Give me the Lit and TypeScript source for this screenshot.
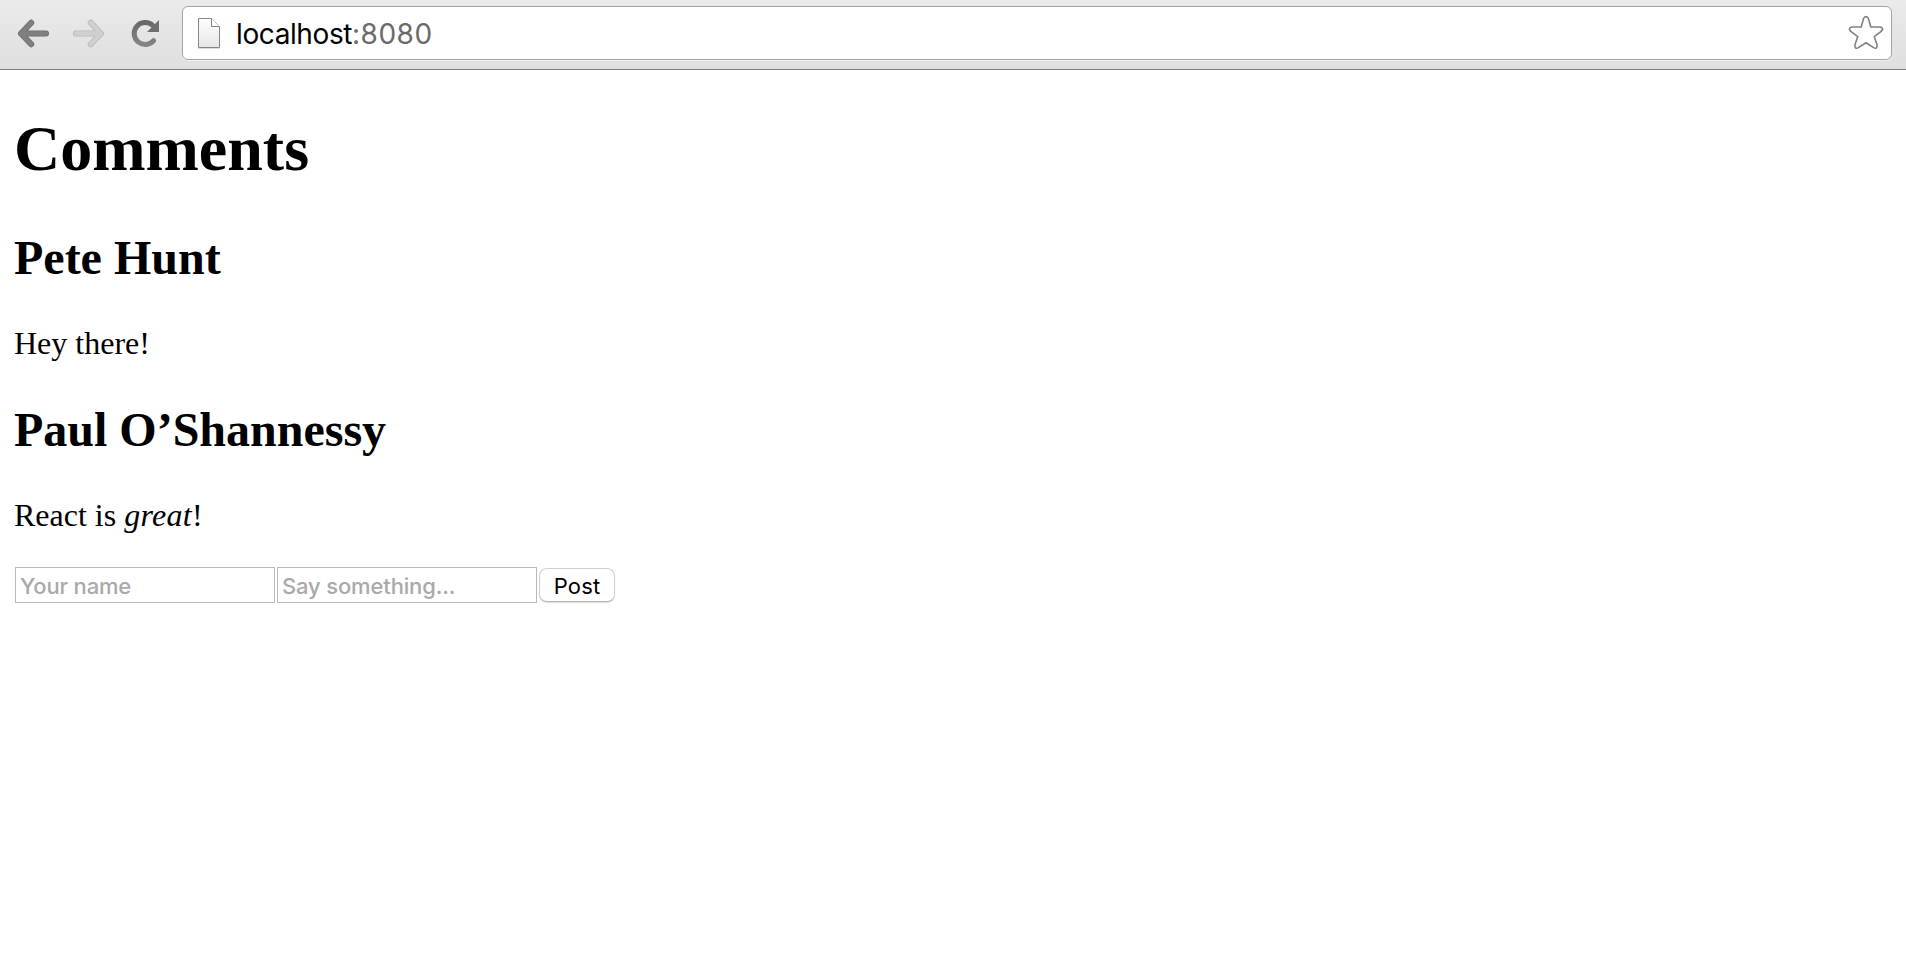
import { LitElement, css, html } from "lit";
import { customElement, property } from "lit/decorators.js";

/**
 * @tag browser-toolbar
 * @summary Navigation buttons and the address bar
 */
@customElement("browser-toolbar")
export class BrowserToolbar extends LitElement {
  @property()
  host = "";

  @property()
  port = "";

  static styles = css`
    :host {
      display: block;
    }

    .toolbar {
      align-items: flex-start;
      background: linear-gradient(#ebebeb, #e0dee0);
      border-bottom: 1px solid #7d7b7d;
      box-sizing: border-box;
      display: flex;
      height: 70px;
      padding: 6px 14px 0 0;
    }

    .nav {
      flex: none;
      height: 56px;
      width: 182px;
    }

    .arrow {
      fill: none;
      stroke-linecap: round;
      stroke-linejoin: round;
    }

    .address {
      align-items: center;
      background: #fff;
      border: 1px solid #a5a4a5;
      border-radius: 6px;
      box-shadow: 0 1px 0 #f0eff0;
      box-sizing: border-box;
      display: flex;
      flex: 1;
      height: 54px;
      padding: 0 7px 0 14px;
    }

    .page {
      flex: none;
      height: 34px;
      width: 24px;
    }

    .url {
      color: #000;
      flex: 1;
      font: 28px/34px Inter, sans-serif;
      letter-spacing: -0.4px;
      padding: 2px 0 0 15px;
    }

    .port {
      color: #6a6a6a;
      letter-spacing: 0.5px;
    }

    .star {
      flex: none;
      height: 36px;
      width: 36px;
    }
  `;

  render() {
    return html`
      <div class="toolbar">
        <svg class="nav" viewBox="0 6 182 56">
          <defs>
            <linearGradient id="dark" x1="0" y1="0" x2="0" y2="1">
              <stop offset="0" stop-color="#686868" />
              <stop offset="1" stop-color="#858585" />
            </linearGradient>
          </defs>
          <g class="arrow">
            <path
              d="M31.2 22.8 21 33.5 31.2 44.2M22 33.5H46"
              stroke="#6a6a6a"
              stroke-width="6"
            />
            <path
              d="M31.2 22.8 21 33.5 31.2 44.2M22 33.5H46"
              stroke="#808080"
              stroke-width="4.4"
            />
          </g>
          <g class="arrow">
            <path
              d="M90.8 22.8 101 33.5 90.8 44.2M100 33.5H76"
              stroke="#b8b8b8"
              stroke-width="6"
            />
            <path
              d="M90.8 22.8 101 33.5 90.8 44.2M100 33.5H76"
              stroke="#d0d0d0"
              stroke-width="4.4"
            />
          </g>
          <path
            d="M153.6 40.6A11 11 0 1 1 152.4 25.2"
            fill="none"
            stroke="url(#dark)"
            stroke-width="5"
            stroke-linecap="round"
          />
          <path d="M159 20V32H147Z" fill="#6e6e6e" />
        </svg>
        <div class="address">
          <svg class="page" viewBox="0 0 24 34">
            <defs>
              <linearGradient id="paper" x1="0" y1="0" x2="0" y2="1">
                <stop offset="0" stop-color="#fff" />
                <stop offset="1" stop-color="#e6e6e6" />
              </linearGradient>
            </defs>
            <path d="M1 32.5H23" stroke="#ddd" />
            <path
              d="M1.5 2.5H14.5L22.5 10.5V31.5H1.5Z"
              fill="url(#paper)"
              stroke="#858585"
            />
            <path d="M14.5 2.5V10.5H22.5" fill="#fff" stroke="#858585" />
          </svg>
          <div class="url">${this.host}<span class="port">:${this.port}</span></div>
          <svg class="star" viewBox="0 0 36 36">
            <path
              d="M15.6 3.4Q18 -.2 20.4 3.4L22.8 12H32Q36.6 13 33.2 16.4L26.2 21.6 29 29.6Q29.6 34.6 25.6 32.6L18 27.8 10.4 32.6Q6.4 34.6 7 29.6L9.8 21.6 2.8 16.4Q-.6 13 4 12H13.2Z"
              fill="#fff"
              stroke="#808080"
              stroke-width="1.6"
              stroke-linejoin="round"
            />
          </svg>
        </div>
      </div>
    `;
  }
}

/**
 * @tag comment-item
 * @summary A single comment
 *
 * @slot - The comment's text
 */
@customElement("comment-item")
export class CommentItem extends LitElement {
  @property()
  author = "";

  static styles = css`
    :host {
      display: block;
    }

    .author {
      font-size: 48px;
      line-height: 56px;
      margin: 0 0 39px;
    }

    .text {
      font-size: 32px;
      line-height: 36px;
    }

    ::slotted(em) {
      letter-spacing: 0.3px;
    }
  `;

  render() {
    return html`
      <h2 class="author">${this.author}</h2>
      <div class="text"><slot></slot></div>
    `;
  }
}

/**
 * @tag comment-form
 * @summary Fields for posting a new comment
 */
@customElement("comment-form")
export class CommentForm extends LitElement {
  static styles = css`
    :host {
      display: block;
    }

    .form {
      display: flex;
      gap: 2px;
      padding-left: 1px;
    }

    .field,
    .post {
      box-sizing: border-box;
      font: 22px/26px Inter, sans-serif;
      margin: 0;
    }

    .field {
      background: #fff;
      border: 1px solid #b9b9b9;
      border-radius: 0;
      height: 36px;
      padding: 2px 4px 0;
      width: 260px;
    }

    .field::placeholder {
      color: #a9a9a9;
      font-weight: 500;
      letter-spacing: -0.15px;
      opacity: 1;
    }

    .post {
      align-self: center;
      background: #fff;
      border: 1px solid #d0d0d0;
      border-bottom-color: #b8b8b8;
      border-radius: 8px;
      box-shadow: 0 1px 1px #ddd;
      color: #000;
      height: 34px;
      letter-spacing: 0.2px;
      padding: 1px 0 0;
      width: 76px;
    }
  `;

  render() {
    return html`
      <form class="form">
        <input class="field" type="text" placeholder="Your name" />
        <input class="field" type="text" placeholder="Say something..." />
        <button class="post" type="button">Post</button>
      </form>
    `;
  }
}

@customElement("app-root")
export class AppRoot extends LitElement {
  static styles = css`
    :host {
      background: #fff;
      color: #000;
      display: block;
      font-family: "Liberation Serif", serif;
      min-height: 954px;
    }

    .content {
      padding: 42px 14px 0;
    }

    .title {
      font-size: 64px;
      line-height: 74px;
      margin: 0 0 44px;
    }

    .comments {
      display: grid;
      gap: 41px;
      margin-bottom: 34px;
    }
  `;

  render() {
    return html`
      <browser-toolbar host="localhost" port="8080"></browser-toolbar>
      <div class="content">
        <h1 class="title">Comments</h1>
        <div class="comments">
          <comment-item author="Pete Hunt">Hey there!</comment-item>
          <comment-item author="Paul O’Shannessy"
            >React is <em>great</em>!</comment-item
          >
        </div>
        <comment-form></comment-form>
      </div>
    `;
  }
}

declare global {
  interface HTMLElementTagNameMap {
    "app-root": AppRoot;
    "browser-toolbar": BrowserToolbar;
    "comment-form": CommentForm;
    "comment-item": CommentItem;
  }
}
